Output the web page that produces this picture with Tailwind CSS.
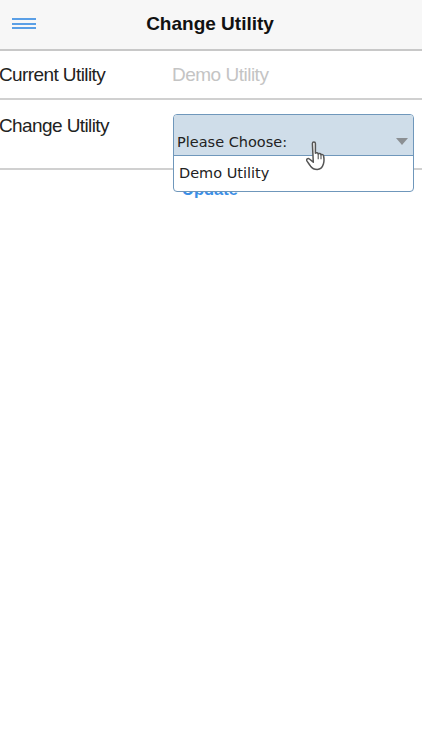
<!DOCTYPE html>
<html lang="en">
<head>
  <meta charset="UTF-8" />
  <title>Change Utility</title>
  <script src="https://cdn.jsdelivr.net/npm/@tailwindcss/browser@4"></script>
</head>
<body class="bg-white min-h-screen font-['Liberation_Sans',sans-serif] overflow-hidden">
  <header class="h-[51px] bg-[#f7f7f7] border-b-2 border-[#c8c8c8] flex items-start relative">
    <button class="ml-3 mt-[18px] w-6 flex flex-col gap-[2.5px]">
      <span class="block h-[2px] bg-[#5a9fe6]"></span>
      <span class="block h-[2px] bg-[#5a9fe6]"></span>
      <span class="block h-[2px] bg-[#5a9fe6]"></span>
    </button>
    <h1 class="absolute inset-x-0 top-[10px] text-center text-[19px] font-bold text-[#111] pr-[2px]">Change Utility</h1>
  </header>

  <main>
    <div class="h-[49px] border-b-2 border-[#d0d0d0] flex items-center pt-[2px]">
      <span class="w-[172px] -ml-[1px] mr-[1px] text-[19px] text-[#222] tracking-[-0.6px]">Current Utility</span>
      <span class="text-[19px] text-[#c4c4c4] tracking-[-0.5px]">Demo Utility</span>
    </div>
    <div class="h-[70px] border-b-2 border-[#d0d0d0] flex items-start relative">
      <span class="w-[172px] -ml-[1px] pt-[12px] text-[19px] text-[#222] tracking-[-0.6px]">Change Utility</span>
      <div class="absolute left-[173px] top-[14px] w-[241px] rounded-[4px] border border-[#6f97bb] bg-white z-10 font-['DejaVu_Sans',sans-serif] text-[14.5px] text-[#222]">
        <div class="h-[41px] bg-[#cfdde9] border-b border-[#6f97bb] rounded-t-[3px] flex items-end justify-between pl-[3px] pr-[5px] pb-[1px]">
          <span>Please Choose:</span>
          <svg class="mb-[9px]" width="12" height="7" viewBox="0 0 12 7"><path d="M0 0h12L6 7z" fill="#8b8f93"/></svg>
        </div>
        <div class="h-[35px] flex items-center pl-[5px]">Demo Utility</div>
      </div>
    </div>
    <div class="pl-[182px] pt-[7px]">
      <a class="text-[16.5px] font-bold text-[#3a8ee6]">Update</a>
    </div>
  </main>

  <svg class="absolute left-[306px] top-[141px] z-20" width="21" height="30" viewBox="0 0 21 30">
    <path d="M6.4 2.6c0-2 3-2 3 0v9.6c1-.8 2.500-.5 2.800.7.9-.8 2.400-.5 2.800.8 1-.6 2.400-.1 2.600 1.300.5 2.600.6 5.600-.2 8-.8 2.700-2.700 5.400-6.200 5.400-3.200 0-5-1-6.600-3.200-1.300-1.900-2.600-3.700-3.700-5.300-1-1.600 1-3.100 2.500-1.900l3.900 3.200z" fill="#fff" stroke="#555" stroke-width="1.500" stroke-linejoin="round"/>
    <path d="M12.200 13v5.200M15 13.700v4.500" fill="none" stroke="#555" stroke-width="1.100"/>
  </svg>
</body>
</html>
